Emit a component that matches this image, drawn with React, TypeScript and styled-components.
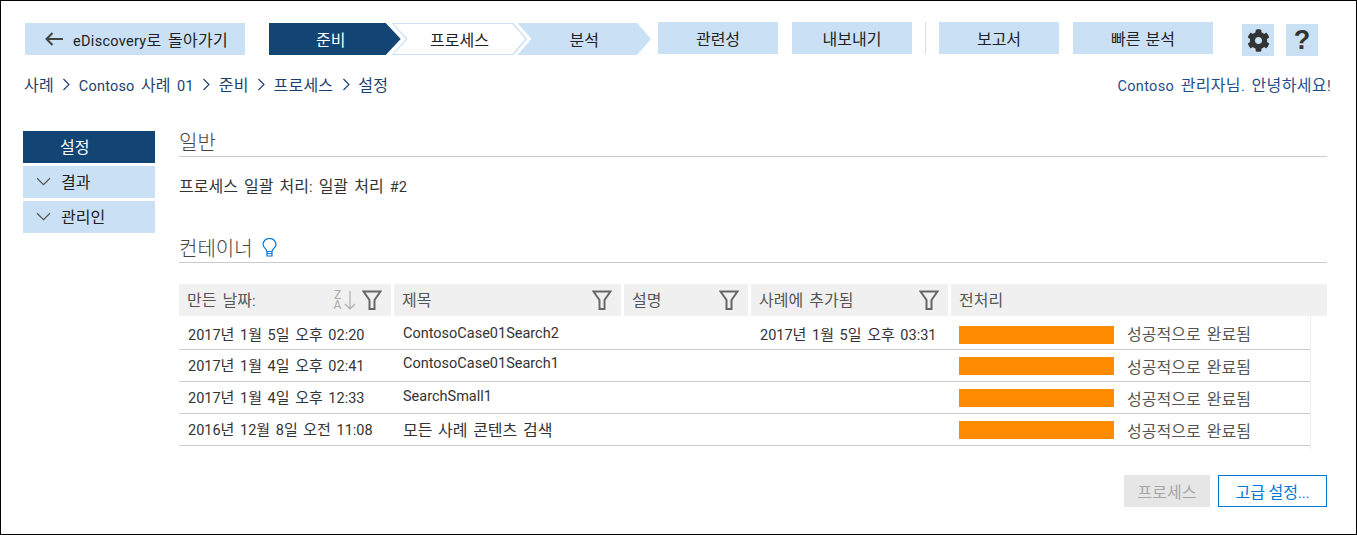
import styled, { createGlobalStyle } from 'styled-components';
import { FaCog } from 'react-icons/fa';

const GlobalStyle = createGlobalStyle`
  html, body {
    margin: 0;
    padding: 0;
    background: #fff;
  }
  body {
    font-family: Roboto, 'Noto Sans CJK KR', sans-serif;
    font-size: 14.5px;
    word-spacing: 2.5px;
    color: #333;
  }
`;

const Frame = styled.div`
  box-sizing: border-box;
  width: 1357px;
  height: 535px;
  border: 1px solid #000;
  padding: 21px 29px 0 22px;
  overflow: hidden;
`;

const Ko = styled.span<{ $small?: boolean }>`
  font-family: 'Noto Sans CJK KR', sans-serif;
  font-size: ${({ $small }) => ($small ? '15px' : '16px')};
`;

const TopBar = styled.header`
  display: flex;
  align-items: flex-start;
  margin-left: 2px;
`;

const BackButton = styled.button`
  box-sizing: border-box;
  width: 220px;
  height: 32px;
  margin: 1px 24px 0 0;
  padding: 0 0 0 20px;
  display: flex;
  align-items: center;
  gap: 10px;
  border: 0;
  background: #cae1f5;
  color: #222;
  font: inherit;
  word-spacing: 2.5px;
  letter-spacing: 0.3px;
`;

const Steps = styled.nav`
  display: flex;
  margin-top: 1px;
  width: 382px;
  height: 32px;
`;

const Step = styled.div<{ $kind: 'active' | 'current' | 'next' }>`
  position: relative;
  box-sizing: border-box;
  height: 32px;
  display: flex;
  align-items: center;
  justify-content: center;
  padding-right: ${({ $kind }) => ($kind === 'active' ? '8px' : '0')};
  color: ${({ $kind }) => ($kind === 'active' ? '#fff' : '#222')};
  background: ${({ $kind }) => ($kind === 'active' ? '#134574' : '#cae1f5')};
  width: ${({ $kind }) => ($kind === 'active' ? '132px' : $kind === 'current' ? '136px' : '134px')};
  margin-left: ${({ $kind }) => ($kind === 'active' ? '0' : $kind === 'current' ? '-9px' : '-10px')};
  z-index: ${({ $kind }) => ($kind === 'active' ? 3 : $kind === 'current' ? 2 : 1)};
  clip-path: ${({ $kind }) =>
    $kind === 'active'
      ? 'polygon(0 0, calc(100% - 15px) 0, 100% 50%, calc(100% - 15px) 100%, 0 100%)'
      : 'polygon(0 0, calc(100% - 14px) 0, 100% 50%, calc(100% - 14px) 100%, 0 100%, 14px 50%)'};

  &::before {
    content: ${({ $kind }) => ($kind === 'current' ? "''" : 'none')};
    position: absolute;
    inset: 0;
    background: #fff;
    z-index: -1;
    clip-path: polygon(2px 1px, calc(100% - 15px) 1px, calc(100% - 2px) 50%, calc(100% - 15px) calc(100% - 1px), 2px calc(100% - 1px), 16px 50%);
  }
`;

const TabButton = styled.button<{ $width: number }>`
  width: ${({ $width }) => $width}px;
  height: 32px;
  padding: 0;
  border: 0;
  background: #cae1f5;
  color: #222;
  font: inherit;
  word-spacing: 1.5px;
`;

const TabGroup = styled.div<{ $offset?: number }>`
  display: flex;
  gap: 14px;
  margin-left: ${({ $offset }) => $offset ?? 0}px;
`;

const Divider = styled.div`
  width: 1px;
  height: 32px;
  margin: 0 13px;
  background: #d5dfe8;
`;

const IconGroup = styled.div`
  display: flex;
  gap: 12px;
  margin: 2px 0 0 29px;
`;

const IconButton = styled.button`
  width: 32px;
  height: 32px;
  padding: 0;
  display: flex;
  align-items: center;
  justify-content: center;
  border: 0;
  background: #cae1f5;
  color: #333;
  font-family: 'Liberation Sans', sans-serif;
  font-size: 27px;
  font-weight: 700;
`;

const CrumbBar = styled.div`
  display: flex;
  justify-content: space-between;
  align-items: center;
  height: 26px;
  margin: 15px -4px 0 1px;
  color: #1c3f6e;
`;

const Crumbs = styled.div`
  display: flex;
  align-items: center;
  gap: 8.5px;
  letter-spacing: 0.2px;
`;

const Greeting = styled.div`
  color: #1f4e8c;
  letter-spacing: 0.35px;
`;

const Main = styled.main`
  display: flex;
  margin-top: 34px;
`;

const Sidebar = styled.aside`
  width: 132px;
  margin-right: 24px;
  display: flex;
  flex-direction: column;
  gap: 3px;
`;

const SideItem = styled.div<{ $active?: boolean }>`
  box-sizing: border-box;
  height: 32px;
  display: flex;
  align-items: center;
  gap: 10px;
  padding: 0 0 2px ${({ $active }) => ($active ? '37px' : '13px')};
  background: ${({ $active }) => ($active ? '#134574' : '#cae1f5')};
  color: ${({ $active }) => ($active ? '#fff' : '#222')};
`;

const Content = styled.section`
  flex: 1;
`;

const SectionTitle = styled.h2<{ $gapTop?: number }>`
  box-sizing: border-box;
  height: 26px;
  margin: ${({ $gapTop }) => $gapTop ?? 0}px 0 0;
  display: flex;
  align-items: center;
  gap: 9px;
  border-bottom: 1px solid #ccc;
  padding-bottom: 5px;
  font-family: 'Noto Sans CJK KR', sans-serif;
  font-size: 20px;
  font-weight: 300;
  color: #444;
`;

const Summary = styled.p`
  height: 20px;
  margin: 18px 0 0;
  line-height: 20px;
  color: #333;
`;

const HeaderRow = styled.div`
  display: grid;
  grid-template-columns: 212px 227px 124px 197px 376px;
  column-gap: 3px;
  margin-top: 21px;
`;

const HeaderCell = styled.div`
  height: 32px;
  display: flex;
  align-items: center;
  justify-content: space-between;
  padding: 0 9px 0 8px;
  background: #f0f0f0;
  color: #555;
`;

const HeaderLabel = styled.span`
  margin-bottom: 3px;
`;

const HeaderIcons = styled.div`
  display: flex;
  align-items: center;
  gap: 1px;
`;

const SortLetters = styled.div`
  display: flex;
  flex-direction: column;
  width: 11px;
  color: #aaa;
  font-size: 12px;
  line-height: 10px;
  text-align: center;
`;

const TableBody = styled.div`
  width: 1132px;
  box-sizing: border-box;
  padding-bottom: 4px;
  border-right: 1px solid #eee;
`;

const Row = styled.div<{ $tall?: boolean }>`
  box-sizing: border-box;
  height: ${({ $tall }) => ($tall ? '34px' : '32px')};
  padding-top: ${({ $tall }) => ($tall ? '1px' : '0')};
  display: grid;
  grid-template-columns: 215px 357px 200px 1fr;
  align-items: center;
  border-bottom: 1px solid #ccc;
  color: #333;
`;

const Cell = styled.div<{ $lift?: number }>`
  padding-left: 9px;
  padding-bottom: ${({ $lift }) => $lift ?? 0}px;
  white-space: nowrap;
  word-spacing: 2px;
`;

const StatusCell = styled.div`
  display: flex;
  align-items: center;
  gap: 13px;
  padding-left: 8px;
  color: #555;
`;

const Bar = styled.div<{ $drop?: boolean }>`
  width: 155px;
  height: 18px;
  margin-top: ${({ $drop }) => ($drop ? '3px' : '0')};
  background: #ff8c00;
`;

const Actions = styled.div`
  display: flex;
  justify-content: flex-end;
  gap: 8px;
  margin-top: 25px;
`;

const ActionButton = styled.button<{ $primary?: boolean }>`
  box-sizing: border-box;
  width: ${({ $primary }) => ($primary ? '109px' : '86px')};
  height: 32px;
  padding: 0;
  border: ${({ $primary }) => ($primary ? '1px solid #0078d7' : '0')};
  background: ${({ $primary }) => ($primary ? '#fff' : '#e6e6e6')};
  color: ${({ $primary }) => ($primary ? '#0078d7' : '#a6a6a6')};
  font: inherit;
`;

// Hangul runs wider than the latin in the original font, so they get their own span
function Txt({ children, small }: { children: string; small?: boolean }) {
  return (
    <span>
      {children.split(/([가-힣]+)/).map((part, i) => (i % 2 ? <Ko key={i} $small={small}>{part}</Ko> : part))}
    </span>
  );
}

function BackArrow() {
  return (
    <svg width="18" height="14" viewBox="0 0 18 14" fill="none" stroke="#444" strokeWidth="2">
      <path d="M7.5 1 L1.5 7 L7.5 13 M1.5 7 H18" />
    </svg>
  );
}

function CrumbChevron() {
  return (
    <svg width="8" height="13" viewBox="0 0 8 13" fill="none" stroke="#1c3f6e" strokeWidth="1.1">
      <polyline points="1.5,1 7,6.5 1.5,12" />
    </svg>
  );
}

function DownChevron() {
  return (
    <svg width="15" height="15" viewBox="0 0 14 14" fill="none" stroke="#555" strokeWidth="1.1">
      <polyline points="1,4 7,10 13,4" />
    </svg>
  );
}

function Funnel() {
  return (
    <svg width="20" height="20" viewBox="0 0 20 20" fill="none" stroke="#666" strokeWidth="2">
      <path d="M1.5 1.5 H18.5 L12.5 10 V19 H7.5 V10 Z" />
    </svg>
  );
}

function Bulb() {
  return (
    <svg width="15" height="19" viewBox="0 0 15 19" fill="none" stroke="#0078d7" strokeWidth="1.2">
      <path d="M5 13.5 C4.5 10.5 1 9.5 1 6.5 A6.5 6 0 0 1 14 6.5 C14 9.5 10.5 10.5 10 13.5 Z" />
      <path d="M5 13.5 V18 H10 V13.5 M5 15.5 H10" />
    </svg>
  );
}

function SortIcon() {
  return (
    <>
      <SortLetters>
        <span>Z</span>
        <span>A</span>
      </SortLetters>
      <svg width="17" height="22" viewBox="0 0 17 22" fill="none" stroke="#aaa" strokeWidth="1.1">
        <path d="M6 2 V20 M1 15 L6 20 L11 15" />
      </svg>
    </>
  );
}

const crumbs = ['사례', 'Contoso 사례 01', '준비', '프로세스', '설정'];

const rows = [
  { date: '2017년 1월 5일 오후 02:20', title: 'ContosoCase01Search2', added: '2017년 1월 5일 오후 03:31', dateLift: 0, lift: 0 },
  { date: '2017년 1월 4일 오후 02:41', title: 'ContosoCase01Search1', added: '', dateLift: 2, lift: 4 },
  { date: '2017년 1월 4일 오후 12:33', title: 'SearchSmall1', added: '', dateLift: 3, lift: 3 },
  { date: '2016년 12월 8일 오전 11:08', title: '모든 사례 콘텐츠 검색', added: '', dateLift: 2, lift: 1 },
];

export default function App() {
  return (
    <>
      <GlobalStyle />
      <Frame>
        <TopBar>
          <BackButton>
            <BackArrow />
            <Txt>eDiscovery로 돌아가기</Txt>
          </BackButton>
          <Steps>
            <Step $kind="active"><Txt>준비</Txt></Step>
            <Step $kind="current"><Txt>프로세스</Txt></Step>
            <Step $kind="next"><Txt>분석</Txt></Step>
          </Steps>
          <TabGroup $offset={7}>
            <TabButton $width={120}><Txt>관련성</Txt></TabButton>
            <TabButton $width={120}><Txt>내보내기</Txt></TabButton>
          </TabGroup>
          <Divider />
          <TabGroup>
            <TabButton $width={120}><Txt>보고서</Txt></TabButton>
            <TabButton $width={140}><Txt>빠른 분석</Txt></TabButton>
          </TabGroup>
          <IconGroup>
            <IconButton aria-label="설정">
              <FaCog size={23} color="#333" />
            </IconButton>
            <IconButton aria-label="도움말">?</IconButton>
          </IconGroup>
        </TopBar>

        <CrumbBar>
          <Crumbs>
            {crumbs.map((crumb, i) => (
              <Crumbs key={crumb}>
                {i > 0 && <CrumbChevron />}
                <Txt>{crumb}</Txt>
              </Crumbs>
            ))}
          </Crumbs>
          <Greeting><Txt>Contoso 관리자님. 안녕하세요!</Txt></Greeting>
        </CrumbBar>

        <Main>
          <Sidebar>
            <SideItem $active><Txt>설정</Txt></SideItem>
            <SideItem>
              <DownChevron />
              <Txt>결과</Txt>
            </SideItem>
            <SideItem>
              <DownChevron />
              <Txt>관리인</Txt>
            </SideItem>
          </Sidebar>
          <Content>
            <SectionTitle>일반</SectionTitle>
            <Summary><Txt>프로세스 일괄 처리: 일괄 처리 #2</Txt></Summary>
            <SectionTitle $gapTop={42}>
              컨테이너
              <Bulb />
            </SectionTitle>
            <HeaderRow>
              <HeaderCell>
                <HeaderLabel><Txt>만든 날짜:</Txt></HeaderLabel>
                <HeaderIcons>
                  <SortIcon />
                  <Funnel />
                </HeaderIcons>
              </HeaderCell>
              <HeaderCell>
                <HeaderLabel><Txt>제목</Txt></HeaderLabel>
                <Funnel />
              </HeaderCell>
              <HeaderCell>
                <HeaderLabel><Txt>설명</Txt></HeaderLabel>
                <Funnel />
              </HeaderCell>
              <HeaderCell>
                <HeaderLabel><Txt>사례에 추가됨</Txt></HeaderLabel>
                <Funnel />
              </HeaderCell>
              <HeaderCell><HeaderLabel><Txt>전처리</Txt></HeaderLabel></HeaderCell>
            </HeaderRow>
            <TableBody>
              {rows.map((row, i) => (
                <Row key={row.title} $tall={i === 0}>
                  <Cell $lift={row.dateLift}><Txt small>{row.date}</Txt></Cell>
                  <Cell $lift={row.lift}><Txt>{row.title}</Txt></Cell>
                  <Cell><Txt small>{row.added}</Txt></Cell>
                  <StatusCell>
                    <Bar $drop={i === 0} />
                    <Txt>성공적으로 완료됨</Txt>
                  </StatusCell>
                </Row>
              ))}
            </TableBody>
            <Actions>
              <ActionButton><Txt>프로세스</Txt></ActionButton>
              <ActionButton $primary><Txt>고급 설정...</Txt></ActionButton>
            </Actions>
          </Content>
        </Main>
      </Frame>
    </>
  );
}
